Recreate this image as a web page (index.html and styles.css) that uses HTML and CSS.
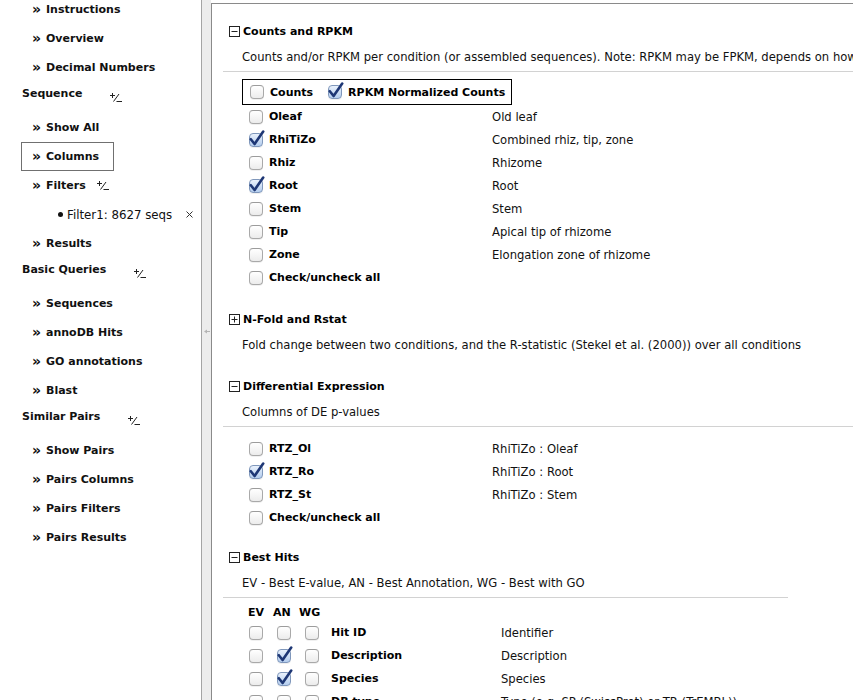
FILE: index.html
```html
<!DOCTYPE html>
<html>
<head>
<meta charset="utf-8">
<link rel="stylesheet" href="styles.css">
</head>
<body>
<nav class="side">
  <div class="item"><span class="gl">»</span>Instructions</div>
  <div class="item"><span class="gl">»</span>Overview</div>
  <div class="item"><span class="gl">»</span>Decimal Numbers</div>
  <div class="head">Sequence<svg class="pm pm-head" viewBox="0 0 12 9"><path d="M0 2.5h5M2.5 0v5M3.5 8.5L9 1M6.5 8.5h5.5"/></svg></div>
  <div class="item"><span class="gl">»</span>Show All</div>
  <div class="item sel"><span class="gl">»</span>Columns</div>
  <div class="item"><span class="gl">»</span>Filters<svg class="pm pm-item" viewBox="0 0 12 9"><path d="M0 2.5h5M2.5 0v5M3.5 8.5L9 1M6.5 8.5h5.5"/></svg></div>
  <div class="sub"><span class="dot"></span>Filter1: 8627 seqs<svg class="x" viewBox="0 0 7 7"><path d="M0.5 0.5l6 6M6.5 0.5l-6 6"/></svg></div>
  <div class="item"><span class="gl">»</span>Results</div>
  <div class="head">Basic Queries<svg class="pm pm-head" viewBox="0 0 12 9"><path d="M0 2.5h5M2.5 0v5M3.5 8.5L9 1M6.5 8.5h5.5"/></svg></div>
  <div class="item"><span class="gl">»</span>Sequences</div>
  <div class="item"><span class="gl">»</span>annoDB Hits</div>
  <div class="item"><span class="gl">»</span>GO annotations</div>
  <div class="item"><span class="gl">»</span>Blast</div>
  <div class="head">Similar Pairs<svg class="pm pm-head" viewBox="0 0 12 9"><path d="M0 2.5h5M2.5 0v5M3.5 8.5L9 1M6.5 8.5h5.5"/></svg></div>
  <div class="item"><span class="gl">»</span>Show Pairs</div>
  <div class="item"><span class="gl">»</span>Pairs Columns</div>
  <div class="item"><span class="gl">»</span>Pairs Filters</div>
  <div class="item"><span class="gl">»</span>Pairs Results</div>
</nav>
<div class="split"><svg class="grip" viewBox="0 0 6 5"><path d="M0 2.5L3 0.5V4.5Z M3 2h3v1h-3z"/></svg></div>
<main class="panel">
  <section class="sec sec-first">
    <div class="title"><svg class="tog" viewBox="0 0 11 11"><rect x="0.5" y="0.5" width="10" height="10"/><path d="M2.5 5.5h6"/></svg>Counts and RPKM</div>
    <div class="desc">Counts and/or RPKM per condition (or assembled sequences). Note: RPKM may be FPKM, depends on how</div>
    <div class="rule"></div>
    <div class="ctbox">
      <span class="cb"></span><span class="blab">Counts</span>
      <span class="cb on gapl"><svg class="ck" viewBox="0 0 16 17"><path d="M1.8 9.2L5.6 14L14.2 1.6"/></svg></span><span class="blab">RPKM Normalized Counts</span>
    </div>
    <div class="row"><span class="cb"></span><span class="lab">Oleaf</span><span class="val">Old leaf</span></div>
    <div class="row"><span class="cb on"><svg class="ck" viewBox="0 0 16 17"><path d="M1.8 9.2L5.6 14L14.2 1.6"/></svg></span><span class="lab">RhiTiZo</span><span class="val">Combined rhiz, tip, zone</span></div>
    <div class="row"><span class="cb"></span><span class="lab">Rhiz</span><span class="val">Rhizome</span></div>
    <div class="row"><span class="cb on"><svg class="ck" viewBox="0 0 16 17"><path d="M1.8 9.2L5.6 14L14.2 1.6"/></svg></span><span class="lab">Root</span><span class="val">Root</span></div>
    <div class="row"><span class="cb"></span><span class="lab">Stem</span><span class="val">Stem</span></div>
    <div class="row"><span class="cb"></span><span class="lab">Tip</span><span class="val">Apical tip of rhizome</span></div>
    <div class="row"><span class="cb"></span><span class="lab">Zone</span><span class="val">Elongation zone of rhizome</span></div>
    <div class="row"><span class="cb"></span><span class="lab">Check/uncheck all</span><span class="val"></span></div>
  </section>
  <section class="sec">
    <div class="title"><svg class="tog" viewBox="0 0 11 11"><rect x="0.5" y="0.5" width="10" height="10"/><path d="M2.5 5.5h6M5.5 2.5v6"/></svg>N-Fold and Rstat</div>
    <div class="desc">Fold change between two conditions, and the R-statistic (Stekel et al. (2000)) over all conditions</div>
  </section>
  <section class="sec sec-tight">
    <div class="title"><svg class="tog" viewBox="0 0 11 11"><rect x="0.5" y="0.5" width="10" height="10"/><path d="M2.5 5.5h6"/></svg>Differential Expression</div>
    <div class="desc">Columns of DE p-values</div>
    <div class="rule"></div>
    <div class="rows-de">
      <div class="row"><span class="cb"></span><span class="lab">RTZ_Ol</span><span class="val">RhiTiZo : Oleaf</span></div>
      <div class="row"><span class="cb on"><svg class="ck" viewBox="0 0 16 17"><path d="M1.8 9.2L5.6 14L14.2 1.6"/></svg></span><span class="lab">RTZ_Ro</span><span class="val">RhiTiZo : Root</span></div>
      <div class="row"><span class="cb"></span><span class="lab">RTZ_St</span><span class="val">RhiTiZo : Stem</span></div>
      <div class="row"><span class="cb"></span><span class="lab">Check/uncheck all</span><span class="val"></span></div>
    </div>
  </section>
  <section class="sec">
    <div class="title"><svg class="tog" viewBox="0 0 11 11"><rect x="0.5" y="0.5" width="10" height="10"/><path d="M2.5 5.5h6"/></svg>Best Hits</div>
    <div class="desc">EV - Best E-value, AN - Best Annotation, WG - Best with GO</div>
    <div class="rule rule-short"></div>
    <div class="bh-head"><span class="h1">EV</span><span class="h2">AN</span><span>WG</span></div>
    <div class="bh-row"><span class="cb"></span><span class="cb"></span><span class="cb"></span><span class="bh-lab">Hit ID</span><span class="val">Identifier</span></div>
    <div class="bh-row"><span class="cb"></span><span class="cb on"><svg class="ck" viewBox="0 0 16 17"><path d="M1.8 9.2L5.6 14L14.2 1.6"/></svg></span><span class="cb"></span><span class="bh-lab">Description</span><span class="val">Description</span></div>
    <div class="bh-row"><span class="cb"></span><span class="cb on"><svg class="ck" viewBox="0 0 16 17"><path d="M1.8 9.2L5.6 14L14.2 1.6"/></svg></span><span class="cb"></span><span class="bh-lab">Species</span><span class="val">Species</span></div>
    <div class="bh-row"><span class="cb"></span><span class="cb"></span><span class="cb"></span><span class="bh-lab">DB type</span><span class="val">Type (e.g. SP (SwissProt) or TR (TrEMBL))</span></div>
  </section>
</main>
</body>
</html>
```

FILE: styles.css
```css
html, body {
  margin: 0;
  padding: 0;
}
body {
  width: 853px;
  height: 700px;
  overflow: hidden;
  display: flex;
  align-items: flex-start;
  background: #fff;
  color: #111;
  font-family: "DejaVu Sans", sans-serif;
}

/* sidebar */
.side {
  width: 201px;
  flex: none;
  margin-top: -5px;
  display: flex;
  flex-direction: column;
  align-items: flex-start;
  font-size: 11px;
  font-weight: bold;
}
.item {
  box-sizing: border-box;
  height: 29px;
  margin-left: 21px;
  padding: 0 14px 0 10px;
  border: 1px solid transparent;
  display: flex;
  align-items: center;
}
.item.sel {
  border-color: #707070;
}
.gl {
  width: 14px;
  font-size: 14px;
  line-height: 1;
  position: relative;
  top: -1px;
}
.head {
  height: 23px;
  margin-left: 22px;
  margin-bottom: 8px;
  display: flex;
  align-items: center;
}
.pm {
  width: 12px;
  height: 9px;
  fill: none;
  stroke: #222;
  stroke-width: 1;
}
.pm-head {
  margin-left: 28px;
  margin-top: 7px;
}
.pm-item {
  margin-left: 11px;
}
.sub {
  height: 29px;
  padding-left: 58px;
  display: flex;
  align-items: center;
  font-weight: normal;
  font-size: 11.8px;
}
.dot {
  width: 5px;
  height: 5px;
  border-radius: 50%;
  background: #111;
  margin-right: 4px;
}
.x {
  width: 7px;
  height: 7px;
  margin-left: 14px;
  fill: none;
  stroke: #333;
  stroke-width: 1;
}

/* splitter */
.split {
  width: 9px;
  height: 700px;
  flex: none;
  border-left: 1px solid #a4a4a4;
  background: #ececec;
}
.grip {
  display: block;
  width: 6px;
  height: 5px;
  margin: 329px 0 0 2px;
  fill: #b4b4b4;
}

/* content panel */
.panel {
  flex: 1;
  min-width: 0;
  height: 697px;
  margin-top: 3px;
  border-top: 1px solid #8a8a8a;
  border-left: 1px solid #8a8a8a;
  overflow: hidden;
  padding-top: 16px;
  white-space: nowrap;
  color: #000;
  box-sizing: border-box;
}
.sec {
  margin-bottom: 18px;
}
.sec-first {
  margin-bottom: 19px;
}
.sec-tight {
  margin-bottom: 17px;
}
.title {
  height: 23px;
  padding-left: 17px;
  display: flex;
  align-items: center;
  gap: 3px;
  font-size: 11px;
  font-weight: bold;
}
.tog {
  width: 11px;
  height: 11px;
  fill: none;
  stroke: #222;
  stroke-width: 1;
  flex: none;
}
.desc {
  height: 23px;
  line-height: 23px;
  margin-top: 3px;
  padding-left: 30px;
  font-size: 11.6px;
  color: #111;
}
.rule {
  height: 1px;
  margin: 2px 0 0 11px;
  background: #d2d2d2;
}
.rule-short {
  width: 565px;
}
.ctbox {
  box-sizing: border-box;
  width: 270px;
  height: 26px;
  margin: 7px 0 0 30px;
  border: 1px solid #000;
  padding-left: 7px;
  display: flex;
  align-items: center;
}
.blab {
  margin-left: 6px;
  font-size: 11px;
  font-weight: bold;
}
.gapl {
  margin-left: 15px;
}
.row {
  height: 23px;
  padding-left: 37px;
  display: grid;
  grid-template-columns: 14px 217px auto;
  column-gap: 6px;
  align-items: center;
}
.lab {
  font-size: 11px;
  font-weight: bold;
}
.val {
  font-size: 11.6px;
  color: #111;
}
.rows-de {
  padding-top: 10px;
}

/* checkboxes */
.cb {
  box-sizing: border-box;
  width: 14px;
  height: 14px;
  border: 1px solid #a9a9a9;
  border-top-color: #9c9c9c;
  border-radius: 4px;
  background: linear-gradient(#ffffff, #ececec);
  box-shadow: 0 1px 0 rgba(0, 0, 0, 0.06);
  position: relative;
  flex: none;
}
.cb.on {
  border-color: #7f97bb;
  background: linear-gradient(#e9f1fc, #b4cdee);
}
.ck {
  position: absolute;
  left: -1px;
  top: -4px;
  width: 16px;
  height: 17px;
  fill: none;
  stroke: #1e3775;
  stroke-width: 2.6;
  stroke-linecap: round;
  stroke-linejoin: round;
}

/* best hits */
.bh-head {
  height: 17px;
  margin-top: 6px;
  padding-left: 36px;
  display: flex;
  align-items: center;
  font-size: 11px;
  font-weight: bold;
}
.h1 {
  width: 25px;
}
.h2 {
  width: 26px;
}
.bh-row {
  height: 23px;
  padding-left: 37px;
  display: flex;
  align-items: center;
}
.bh-row .cb + .cb {
  margin-left: 14px;
}
.bh-lab {
  width: 170px;
  margin-left: 12px;
  font-size: 11px;
  font-weight: bold;
}
```
